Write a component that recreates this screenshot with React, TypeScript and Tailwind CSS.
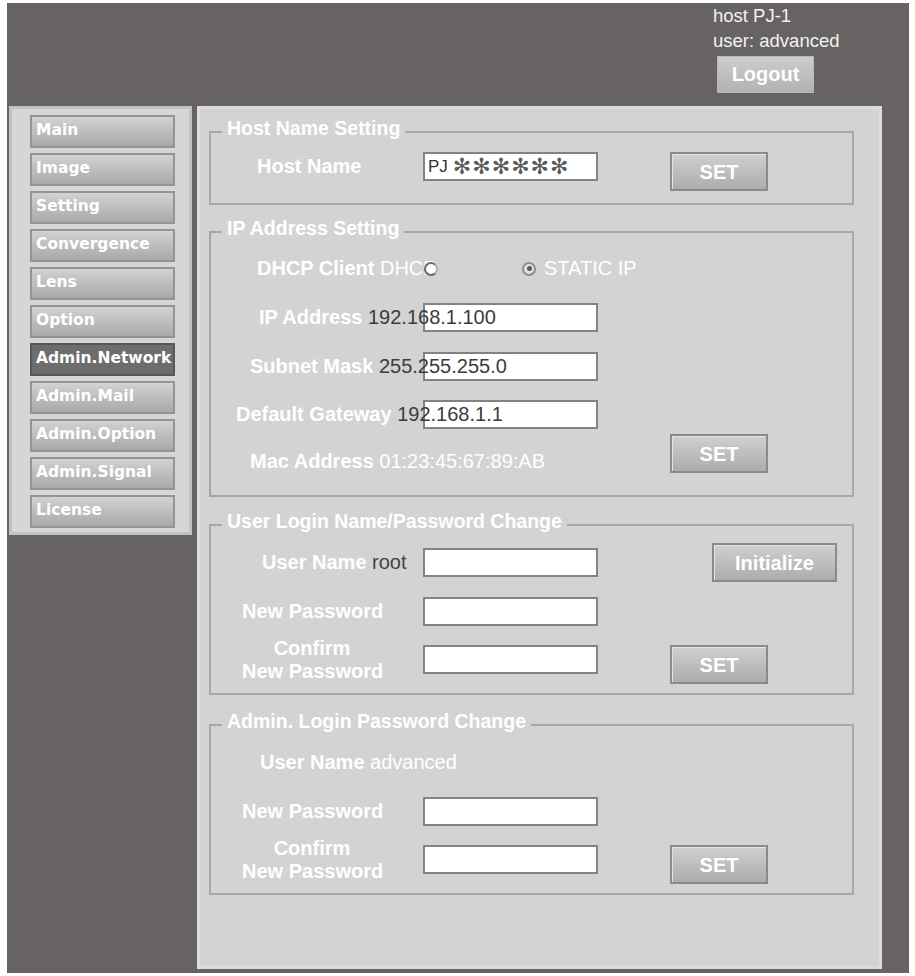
import React from "react";

const menu = [
  "Main",
  "Image",
  "Setting",
  "Convergence",
  "Lens",
  "Option",
  "Admin.Network",
  "Admin.Mail",
  "Admin.Option",
  "Admin.Signal",
  "License",
];

type Kids = { className?: string; children?: React.ReactNode };

// white text box, drawn under any label text that runs into it
const Field = ({ className = "", children }: Kids) => (
  <div
    className={`col-start-1 row-start-1 ml-[212px] flex h-[29px] w-[175px] items-center border-2 border-[#838383] bg-white pl-[3px] ${className}`}
  >
    {children}
  </div>
);

const GrayButton = ({ label, className = "" }: { label: string; className?: string }) => (
  <button
    type="button"
    className={`col-start-1 row-start-1 h-[39px] self-start border-2 border-[#8a8a8a] bg-linear-to-b from-[#d0d0d0] to-[#acacac] text-[20px] leading-none font-bold text-white shadow-[inset_1px_1px_0_#e3e3e3] ${className}`}
  >
    {label}
  </button>
);

const Row = ({ className = "", children }: Kids) => (
  <div className={`grid grid-rows-[29px] items-center justify-items-start ${className}`}>{children}</div>
);

const Label = ({ className = "", children }: Kids) => (
  <span
    className={`z-10 col-start-1 row-start-1 text-[20px] leading-[23px] whitespace-nowrap text-white ${className}`}
  >
    {children}
  </span>
);

const Group = ({ title, className = "", children }: { title: string } & Kids) => (
  <fieldset className={`w-[645px] border-2 border-[#a7a7a7] ${className}`}>
    <legend className="ml-[11px] px-[5px] pb-[8px] text-[19.5px] leading-[22px] font-bold text-white">
      {title}
    </legend>
    {children}
  </fieldset>
);

const Confirm = () => (
  <Label className="pl-[31px] text-center font-bold">
    <span className="block w-[140px]">Confirm</span>
    <span className="block w-[140px]">New Password</span>
  </Label>
);

export default function App() {
  return (
    <div className="min-h-screen bg-white pt-[3px] pl-[7px] font-['Liberation_Sans',Arial,sans-serif]">
      <div className="flex h-[970px] w-[902px] flex-col bg-[#676363]">
        {/* header: current host and user */}
        <header className="flex h-[103px] justify-end">
          <div className="w-[196px] text-[18.5px] leading-[25px] text-[#f2f2f2]">
            <div>host PJ-1</div>
            <div>user: advanced</div>
            <button
              type="button"
              className="mt-[3px] ml-[4px] h-[37px] w-[97px] border border-[#b8b8b8] bg-linear-to-b from-[#cdcdcd] to-[#b2b2b2] text-[20px] font-bold text-white"
            >
              Logout
            </button>
          </div>
        </header>

        <div className="flex items-start">
          {/* side menu */}
          <nav className="ml-[2px] flex w-[183px] flex-col gap-[5px] border-[3px] border-[#c2c2c2] bg-[#d6d6d6] pt-[6px] pb-[4px] pl-[18px]">
            {menu.map((item) => {
              const active = item === "Admin.Network";
              return (
                <div
                  key={item}
                  className={`flex h-[33px] w-[145px] items-center border-2 pb-[2px] pl-[4px] font-['DejaVu_Sans',sans-serif] text-[15.5px] font-bold text-white ${
                    active
                      ? "border-[#575757] bg-[#6d6d6d]"
                      : "border-[#949494] bg-linear-to-b from-[#d2d2d2] to-[#a9a9a9]"
                  }`}
                >
                  {item}
                </div>
              );
            })}
          </nav>

          {/* settings panel */}
          <main className="ml-[5px] h-[863px] w-[685px] border-[3px] border-[#dcdcdc] bg-[#d3d3d3] pt-[8px] pl-[9px]">
            <Group title="Host Name Setting" className="pb-[22px]">
              <Row className="mt-[5px]">
                <Label className="pl-[46px] font-bold">Host Name</Label>
                <Field className="self-start">
                  <span className="text-[17px] text-[#333]">PJ</span>
                  <span className="ml-[5px] font-['DejaVu_Sans',sans-serif] text-[22px] leading-none tracking-[1px] text-[#5a5a5a]">
                    ✻✻✻✻✻✻
                  </span>
                </Field>
                <GrayButton label="SET" className="ml-[459px] w-[98px]" />
              </Row>
            </Group>

            <Group title="IP Address Setting" className="mt-[12px] pt-[7px] pb-[19px]">
              <Row>
                <Label className="pl-[46px]">
                  <b>DHCP Client</b> DHCP
                </Label>
                <span className="z-20 col-start-1 row-start-1 ml-[213px] h-[14px] w-[14px] rounded-full border-2 border-[#6a6a6a] border-r-[#b0b0b0] bg-white" />
                <span className="col-start-1 row-start-1 ml-[311px] flex items-center gap-[8px]">
                  <span className="flex h-[14px] w-[14px] items-center justify-center rounded-full border-2 border-[#8d8d8d] bg-[#e2e2e2]">
                    <span className="h-[5px] w-[5px] rounded-full bg-[#5a5a5a]" />
                  </span>
                  <span className="text-[20px] leading-[23px] text-white">STATIC IP</span>
                </span>
              </Row>
              <Row className="mt-[20px]">
                <Field />
                <Label className="pl-[48px]">
                  <b>IP Address</b> <span className="text-[#3c3c3c]">192.168.1.100</span>
                </Label>
              </Row>
              <Row className="mt-[20px]">
                <Field />
                <Label className="pl-[39px]">
                  <b>Subnet Mask</b> <span className="text-[#3c3c3c]">255.255.255.0</span>
                </Label>
              </Row>
              <Row className="mt-[19px]">
                <Field />
                <Label className="pl-[25px]">
                  <b>Default Gateway</b> <span className="text-[#3c3c3c]">192.168.1.1</span>
                </Label>
              </Row>
              <Row className="mt-[18px]">
                <Label className="pl-[39px]">
                  <b>Mac Address</b> 01:23:45:67:89:AB
                </Label>
                <GrayButton label="SET" className="-mt-[13px] ml-[459px] w-[98px]" />
              </Row>
            </Group>

            <Group title="User Login Name/Password Change" className="mt-[13px] pb-[19px]">
              <Row className="mt-[8px]">
                <Label className="pl-[51px]">
                  <b>User Name</b> <span className="text-[#444]">root</span>
                </Label>
                <Field />
                <GrayButton label="Initialize" className="-mt-[5px] ml-[501px] w-[125px]" />
              </Row>
              <Row className="mt-[20px]">
                <Label className="pl-[31px] font-bold">New Password</Label>
                <Field />
              </Row>
              <Row className="mt-[19px]">
                <Confirm />
                <Field />
                <GrayButton label="SET" className="ml-[459px] w-[98px]" />
              </Row>
            </Group>

            <Group title="Admin. Login Password Change" className="mt-[15px] pb-[19px]">
              <Row className="mt-[8px]">
                <Label className="pl-[49px]">
                  <b>User Name</b> advanced
                </Label>
              </Row>
              <Row className="mt-[20px]">
                <Label className="pl-[31px] font-bold">New Password</Label>
                <Field />
              </Row>
              <Row className="mt-[19px]">
                <Confirm />
                <Field />
                <GrayButton label="SET" className="ml-[459px] w-[98px]" />
              </Row>
            </Group>
          </main>
        </div>
      </div>
    </div>
  );
}
